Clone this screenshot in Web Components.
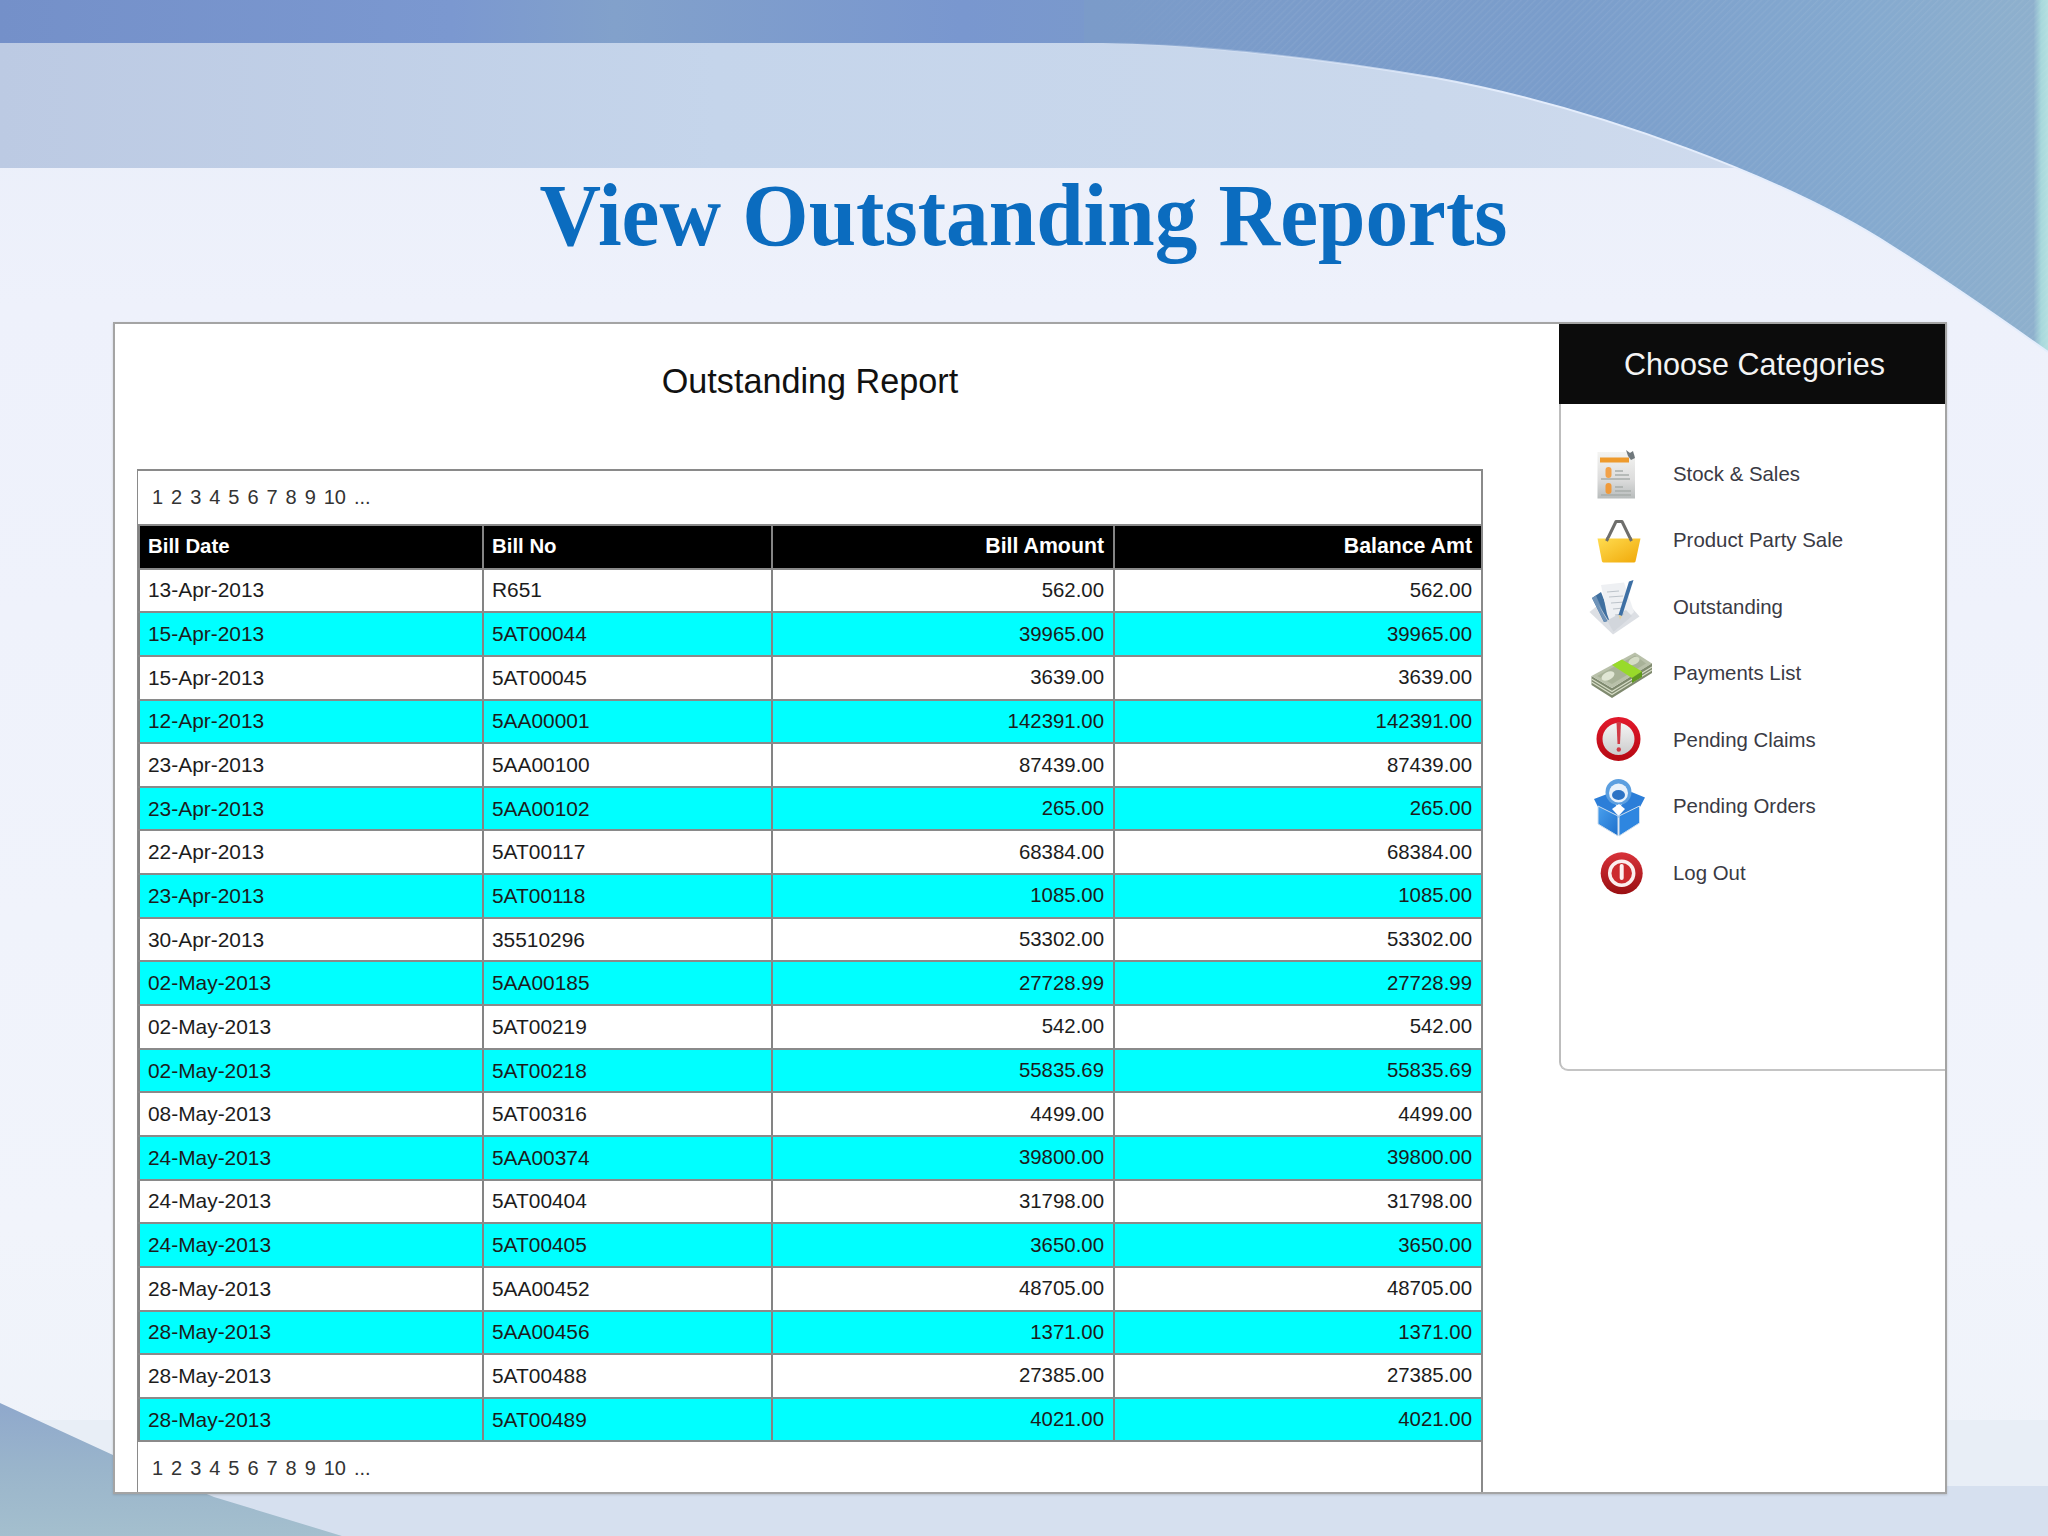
<!DOCTYPE html>
<html lang="en"><head><meta charset="utf-8"><title>View Outstanding Reports</title>
<style>html,body{margin:0;padding:0;background:#eef2fb}</style></head>
<body>
<slide-page>
  <slide-title>View Outstanding Reports</slide-title>
  <report-card>
    <report-main heading="Outstanding Report"></report-main>
    <cat-panel heading="Choose Categories">
      <cat-item label="Stock &amp; Sales"><svg slot="icon" width="70" height="66" viewBox="0 0 70 66">
        <defs><linearGradient id="d1" x1="0" y1="0" x2="0" y2="1"><stop offset="0" stop-color="#f4f4f2"/><stop offset=".6" stop-color="#dcdcdc"/><stop offset="1" stop-color="#b8bcbc"/></linearGradient></defs>
        <path d="M11.5 11H46L49 14V57.5H11.5Z" fill="url(#d1)"/>
        <rect x="14" y="16.5" width="29" height="5" fill="#ee9a2c"/>
        <rect x="19.5" y="26" width="6" height="11" rx="3" fill="#f2a24a"/><rect x="19.5" y="42" width="6" height="11" rx="3" fill="#f09a3a"/>
        <path d="M29 30h8M29 34h14M15 38h29M29 46h8M29 50h16M15 54h30" stroke="#a8adab" stroke-width="1.4"/>
        <path d="M40 9L44 12 47 10 49 17 45 19 42 15Z" fill="#70787c"/>
      </svg></cat-item>
      <cat-item label="Product Party Sale"><svg slot="icon" width="70" height="66" viewBox="0 0 70 66">
        <defs><linearGradient id="b1" x1="0" y1="0" x2="1" y2="1"><stop offset="0" stop-color="#ffdc50"/><stop offset="1" stop-color="#f0a808"/></linearGradient></defs>
        <path d="M20.5 33L30 13.5H36L45.5 33" fill="none" stroke="#6e6e6c" stroke-width="3" stroke-linejoin="round"/>
        <path d="M11.5 30.5H54.5L49.5 53.5Q49 54.5 48 54.5H17.5Q16.5 54.5 16 53.5Z" fill="url(#b1)"/>
        <path d="M20.5 33l1.5-3M45.5 33l-1.5-3" stroke="#6e6e6c" stroke-width="3"/>
      </svg></cat-item>
      <cat-item label="Outstanding"><svg slot="icon" width="70" height="66" viewBox="0 0 70 66">
        <path d="M3.5 38L27 60.500 53.500 42.500 46 34 16 28Z" fill="#dcdfe4"/>
        <path d="M6 24L15 18 26 46 18 48Z" fill="#3f6f9f"/>
        <path d="M6 24L10 21.500 21 47 18 48Z" fill="#6f93b8"/>
        <path d="M15 11L38 8.500 48 38 27.500 58 21 40Z" fill="#eef0f3"/>
        <path d="M12 30L27.500 58 46 42 40 36 22 46Z" fill="#d2d6dc"/>
        <path d="M21 18l12-1M23 23l14-1M25 29l14-1M27 35l11-1M29 41l9-1" stroke="#bcc3ca" stroke-width="1.200"/>
        <path d="M43 7.500L47.500 6 36 42 32.500 41Z" fill="#3d6fa4"/>
        <path d="M32.500 41l3.500 1-2 3.500Z" fill="#e4cf9a"/>
      </svg></cat-item>
      <cat-item label="Payments List"><svg slot="icon" width="70" height="66" viewBox="0 0 70 66">
        <path d="M5.500 35V44L26 57 66 32V22L26 47Z" fill="#7f8a6f"/>
        <path d="M5.500 38L26 50.500 66 26M5.500 41L26 53.500 66 29" stroke="#d6dcc6" stroke-width="1.200" fill="none"/>
        <path d="M5.500 35L49 11.500 66 22.500 26 47Z" fill="#b9c1aa"/>
        <path d="M11 35L49 14.500 60 22.500 26 43Z" fill="#a8b298"/>
        <ellipse cx="22" cy="35" rx="7" ry="4" fill="#e0e6d4" transform="rotate(-28 22 35)"/>
        <ellipse cx="48" cy="20" rx="6" ry="3.500" fill="#d5dcc6" transform="rotate(-28 48 20)"/>
        <path d="M26 24L36 18.500 56 30.500 46 37Z" fill="#98da2a"/>
        <path d="M46 37L56 30.500V36L46 42Z" fill="#5f9a1e"/>
      </svg></cat-item>
      <cat-item label="Pending Claims"><svg slot="icon" width="70" height="66" viewBox="0 0 70 66">
        <defs><linearGradient id="a1" x1="0" y1="0" x2="0" y2="1"><stop offset="0" stop-color="#f8f8f8"/><stop offset="1" stop-color="#c8c8c8"/></linearGradient>
        <linearGradient id="a2" x1="0" y1="0" x2="0" y2="1"><stop offset="0" stop-color="#e0182a"/><stop offset="1" stop-color="#b80a14"/></linearGradient></defs>
        <circle cx="32.500" cy="32" r="19" fill="url(#a1)" stroke="url(#a2)" stroke-width="6"/>
        <path d="M30.500 15H35L34 37H31.500Z" fill="#d03a46"/><circle cx="32.800" cy="42.500" r="2.200" fill="#d03a46"/>
      </svg></cat-item>
      <cat-item label="Pending Orders"><svg slot="icon" width="70" height="66" viewBox="0 0 70 66">
        <defs><linearGradient id="o1" x1="0" y1="0" x2="1" y2="1"><stop offset="0" stop-color="#4aa0ee"/><stop offset="1" stop-color="#1d70cc"/></linearGradient></defs>
        <path d="M8 25L22.500 19.500 32.500 35 45.500 18 59 23.500 54 33 32.500 44 12 33Z" fill="#2c7ed8"/>
        <circle cx="32.500" cy="18" r="13" fill="#5c9fe0"/><circle cx="32.500" cy="19" r="9.500" fill="#e8f1fb"/><ellipse cx="32.500" cy="21" rx="6.500" ry="5" fill="#2c72c4"/>
        <path d="M12 32L32 42V62L12 50Z" fill="url(#o1)" stroke="#cfdfee" stroke-width="1"/>
        <path d="M53.500 32L33 42V62L53.500 49Z" fill="#2e86e0" stroke="#cfdfee" stroke-width="1"/>
        <path d="M26 35L32.500 42 39 35 33 30Z" fill="#fff"/>
      </svg></cat-item>
      <cat-item label="Log Out"><svg slot="icon" width="70" height="66" viewBox="0 0 70 66">
        <defs><linearGradient id="p1" x1="0" y1="0" x2="0" y2="1"><stop offset="0" stop-color="#d8323a"/><stop offset="1" stop-color="#9a0f12"/></linearGradient></defs>
        <circle cx="35.700" cy="33.300" r="21" fill="url(#p1)"/>
        <circle cx="35.700" cy="33.300" r="12" fill="#cc2a2e" stroke="#fbeeee" stroke-width="3.500"/>
        <rect x="33.700" y="24" width="4" height="16" rx="2" fill="#fdf2f2"/>
      </svg></cat-item>
    </cat-panel>
  </report-card>
</slide-page>

<script>
const define=(name,css,html)=>{
  customElements.define(name,class extends HTMLElement{
    connectedCallback(){
      if(this.shadowRoot)return;
      const r=this.attachShadow({mode:'open'});
      r.innerHTML='<style>'+css+'</style>'+(typeof html==='function'?html(this):html);
    }
  });
};

define('slide-page',`
  :host{display:block;position:relative;width:2048px;height:1536px;overflow:hidden;background:#eef2fb}
  svg{position:absolute;inset:0;z-index:0}
  .flow{position:relative;z-index:1;display:flex;flex-direction:column}
`,`
<svg width="2048" height="1536" viewBox="0 0 2048 1536">
  <defs>
    <linearGradient id="base" x1="0" y1="0" x2="0" y2="1"><stop offset="0" stop-color="#e9eef9"/><stop offset=".2" stop-color="#eef1fb"/><stop offset=".8" stop-color="#f1f4fb"/><stop offset="1" stop-color="#eef2f9"/></linearGradient>
    <linearGradient id="band" x1="0" y1="0" x2="1" y2="0"><stop offset="0" stop-color="#bccae3"/><stop offset=".35" stop-color="#c5d5eb"/><stop offset=".7" stop-color="#cad8ec"/><stop offset="1" stop-color="#d2dcee"/></linearGradient>
    <linearGradient id="top" x1="0" y1="0" x2="1" y2="0"><stop offset="0" stop-color="#7490c9"/><stop offset=".22" stop-color="#7b98d0"/><stop offset=".3" stop-color="#82a1cb"/><stop offset=".47" stop-color="#7997cf"/><stop offset=".6" stop-color="#7b9bc9"/><stop offset="1" stop-color="#7b9bc9"/></linearGradient>
    <linearGradient id="curve" gradientUnits="userSpaceOnUse" x1="1084" y1="0" x2="2048" y2="0"><stop offset="0" stop-color="#7b9bc9"/><stop offset=".5" stop-color="#7a9dcb"/><stop offset=".8" stop-color="#84a9cf"/><stop offset=".985" stop-color="#8eb0cd"/><stop offset=".993" stop-color="#a8d8dc"/><stop offset="1" stop-color="#b4dfe0"/></linearGradient>
    <linearGradient id="low" x1="0" y1="0" x2="0" y2="1"><stop offset="0" stop-color="#8fa8cc"/><stop offset=".5" stop-color="#9ab5cb"/><stop offset="1" stop-color="#a4bfce"/></linearGradient>
    <pattern id="hatch" width="5" height="5" patternUnits="userSpaceOnUse" patternTransform="rotate(-45)"><rect width="5" height="1.5" fill="#ffffff" opacity=".06"/></pattern>
    <linearGradient id="fade" gradientUnits="userSpaceOnUse" x1="1084" y1="0" x2="1300" y2="0"><stop offset="0" stop-color="#000"/><stop offset="1" stop-color="#fff"/></linearGradient>
    <linearGradient id="edge" gradientUnits="userSpaceOnUse" x1="1100" y1="0" x2="1500" y2="0"><stop offset="0" stop-color="#e4edfc" stop-opacity="0"/><stop offset="1" stop-color="#e4edfc"/></linearGradient>
    <mask id="m"><rect width="2048" height="400" fill="url(#fade)"/></mask>
  </defs>
  <rect width="2048" height="1536" fill="url(#base)"/>
  <rect y="43" width="2048" height="125" fill="url(#band)"/>
  <rect width="2048" height="43" fill="url(#top)"/>
  <rect y="1420" width="2048" height="66" fill="#e8eef6"/>
  <rect y="1486" width="2048" height="50" fill="#d6e0ef"/>
  <path d="M0 1403L113 1455 214 1497 342 1536H0Z" fill="url(#low)"/>
  <path d="M1084 43C1170 42 1300 55 1436 78C1600 108 1790 180 1893 247C1950 283 2000 318 2048 352V0H1084Z" fill="url(#curve)"/>
  <path d="M1084 43C1170 42 1300 55 1436 78C1600 108 1790 180 1893 247C1950 283 2000 318 2048 352V0H1084Z" fill="url(#hatch)" mask="url(#m)"/>
  <path d="M1084 43C1170 42 1300 55 1436 78C1600 108 1790 180 1893 247C1950 283 2000 318 2048 352" fill="none" stroke="url(#edge)" stroke-width="2"/>
</svg>
<div class="flow"><slot></slot></div>`);

define('slide-title',`
  :host{display:block;padding-top:167px;height:98px;text-align:center;font:bold 88px/98px "Liberation Serif",serif;color:#0b6cbf;white-space:nowrap}
  span{display:inline-block;transform:scaleX(.969)}
`,`<span><slot></slot></span>`);

define('report-card',`
  :host{display:grid;grid-template-columns:1444px 1fr;box-sizing:border-box;width:1834px;height:1172px;margin:57px 0 0 113px;background:#fff;border:2px solid #a4a4a4;box-shadow:0 1px 2px rgba(90,90,90,.25)}
`,`<slot></slot>`);

const rows=[
["13-Apr-2013","R651","562.00","562.00"],["15-Apr-2013","5AT00044","39965.00","39965.00"],["15-Apr-2013","5AT00045","3639.00","3639.00"],["12-Apr-2013","5AA00001","142391.00","142391.00"],["23-Apr-2013","5AA00100","87439.00","87439.00"],["23-Apr-2013","5AA00102","265.00","265.00"],["22-Apr-2013","5AT00117","68384.00","68384.00"],["23-Apr-2013","5AT00118","1085.00","1085.00"],["30-Apr-2013","35510296","53302.00","53302.00"],["02-May-2013","5AA00185","27728.99","27728.99"],["02-May-2013","5AT00219","542.00","542.00"],["02-May-2013","5AT00218","55835.69","55835.69"],["08-May-2013","5AT00316","4499.00","4499.00"],["24-May-2013","5AA00374","39800.00","39800.00"],["24-May-2013","5AT00404","31798.00","31798.00"],["24-May-2013","5AT00405","3650.00","3650.00"],["28-May-2013","5AA00452","48705.00","48705.00"],["28-May-2013","5AA00456","1371.00","1371.00"],["28-May-2013","5AT00488","27385.00","27385.00"],["28-May-2013","5AT00489","4021.00","4021.00"]];

define('report-pager',`
  :host{display:flex;align-items:center;box-sizing:border-box;padding-left:14px;font:20px "Liberation Sans",sans-serif;color:#333;word-spacing:2.4px;background:#fff}
`,`1 2 3 4 5 6 7 8 9 10 ...`);

define('report-row',`
  :host{display:grid;grid-template-columns:344px 289px 342px 1fr;box-sizing:border-box;height:43.65px;border-bottom:2px solid #8a8a8a;font:20.9px "Liberation Sans",sans-serif;color:#1c1c1c;background:#fff}
  :host([alt]){background:#0ff}
  :host([head]){background:#000;color:#fff;font-weight:bold;font-size:20.4px}
  div{display:flex;align-items:center;padding:0 9px 0 8px;border-left:2px solid #848484;min-width:0}
  div:first-child{border-left:0;padding-left:7.5px}
  .r{justify-content:flex-end;font-size:20.4px}
  :host([head]) .r{font-size:21.3px}
`,el=>{
  const c=(el.getAttribute('cells')||'').split('|');
  return `<div>${c[0]}</div><div>${c[1]}</div><div class="r">${c[2]}</div><div class="r">${c[3]}</div>`;
});

define('report-main',`
  :host{display:flex;flex-direction:column;padding-left:22px}
  h2{margin:0;width:1346px;height:145px;box-sizing:border-box;padding-top:32px;font:normal 34.2px/50px "Liberation Sans",sans-serif;color:#111;text-align:center}
  .tbl{width:1346px;flex:1;box-sizing:border-box;border:solid #8a8a8a;border-width:2px 2px 0 1px;display:flex;flex-direction:column}
  report-pager{height:55px;border-bottom:2px solid #8a8a8a}
  report-pager.b{flex:1;height:auto;border:0;padding-top:2px}
`,el=>`<h2>${el.getAttribute('heading')}</h2><div class="tbl"><report-pager></report-pager><report-row head cells="Bill Date|Bill No|Bill Amount|Balance Amt"></report-row>${rows.map((r,i)=>`<report-row ${i%2?'alt':''} cells="${r.join('|')}"></report-row>`).join('')}<report-pager class="b"></report-pager></div>`);

define('cat-panel',`
  :host{display:block;height:747px;box-sizing:border-box;border-left:2px solid #bdbdbd;border-bottom:2px solid #c4c4c4;border-bottom-left-radius:9px}
  header{height:80px;margin-left:-2px;background:#0c0c0c;color:#f4f4f4;display:flex;align-items:center;justify-content:center;padding-left:5px;font:30.5px "Liberation Sans",sans-serif}
  .list{display:flex;flex-direction:column;padding-top:37px}
`,el=>`<header>${el.getAttribute('heading')}</header><div class="list"><slot></slot></div>`);

define('cat-item',`
  :host{display:grid;grid-template-columns:25px 87px 1fr;align-items:center;height:66.5px;font:20.4px "Liberation Sans",sans-serif;color:#3a3a44}
  .ic{grid-column:2;display:flex;height:66px}
`,el=>`<div class="ic"><slot name="icon"></slot></div><span>${el.getAttribute('label').replace(/&/g,'&amp;')}</span>`);
</script>
</body></html>
